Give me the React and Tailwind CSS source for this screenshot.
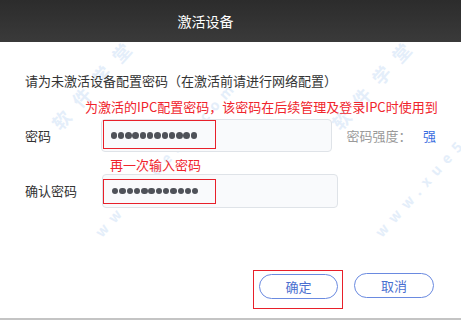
import React from "react";

const font = { fontFamily: '"Noto Sans CJK SC", "Noto Sans", sans-serif' };

function Dots() {
  return (
    <div className="flex items-center gap-[0.9px]">
      {Array.from({ length: 12 }).map((_, i) => (
        <span key={i} className="block w-[6.4px] h-[6.4px] rounded-full bg-[#4f5259]" />
      ))}
    </div>
  );
}

function Watermark({ className }) {
  return (
    <div
      className={"absolute pointer-events-none select-none text-[#e4eefa] font-bold leading-none -rotate-[48deg] origin-top-left whitespace-nowrap " + className}
    >
      <div className="text-[18px] tracking-[12px]">软件学堂</div>
      <div className="text-[14px] tracking-[7px] mt-[88px] -ml-[52px]">www.xue51.com</div>
    </div>
  );
}

export default function App() {
  return (
    <div className="relative w-[461px] h-[320px] bg-white overflow-hidden" style={font}>
      <Watermark className="left-[48px] top-[120px]" />
      <Watermark className="left-[328px] top-[120px]" />

      <div className="relative h-[42px] flex items-center justify-center pr-[50px] bg-gradient-to-b from-[#2c2c2c] to-[#3a3a3a]">
        <span className="text-white text-[14px] leading-none">激活设备</span>
      </div>

      <div className="relative px-[25px]">
        <div className="mt-[29px] text-[13px] leading-[20px] text-[#333] whitespace-nowrap">
          请为未激活设备配置密码（在激活前请进行网络配置）
        </div>
        <div className="mt-[6px] pl-[60px] text-[13px] leading-[20px] text-[#f0242c] whitespace-nowrap">
          为激活的IPC配置密码，该密码在后续管理及登录IPC时使用到
        </div>

        <div className="mt-[2px] flex items-center">
          <div className="w-[77px] text-[13px] text-[#333]">密码</div>
          <div className="relative w-[236px] h-[33px] rounded-[4px] border border-[#dfe3e8] bg-[#f9fafc] flex items-center pl-[9px]">
            <Dots />
            <div className="absolute left-[1px] top-[0px] w-[113px] h-[29px] border-[1.5px] border-[#e8202a]" />
          </div>
          <div className="ml-[14px] text-[13px] text-[#9a9a9a] w-[78px] whitespace-nowrap">密码强度：</div>
          <div className="text-[13px] text-[#3a6ee0]">强</div>
        </div>

        <div className="pl-[85px] text-[13px] leading-[18px] mt-[4px] text-[#f0242c]">再一次输入密码</div>

        <div className="flex items-center">
          <div className="w-[77px] text-[13px] text-[#333]">确认密码</div>
          <div className="relative w-[236px] h-[34px] rounded-[4px] border border-[#dfe3e8] bg-[#f9fafc] flex items-center pl-[9px]">
            <Dots />
            <div className="absolute left-[0px] top-[4px] w-[113px] h-[25px] border-[1.5px] border-[#e8202a]" />
          </div>
        </div>

        <div className="mt-[65px] flex pl-[234px] gap-[16px]">
          <div className="relative">
            <button className="w-[79px] h-[25px] rounded-full border border-[#6a8ae0] text-[#4a6fd0] text-[13px] leading-none bg-white">
              确定
            </button>
            <div className="absolute -left-[6px] -top-[3px] w-[90px] h-[39px] border-[1.5px] border-[#e8202a] pointer-events-none" />
          </div>
          <button className="w-[80px] h-[25px] rounded-full border border-[#6a8ae0] text-[#4a6fd0] text-[13px] leading-none bg-white">
            取消
          </button>
        </div>
      </div>

      <div className="absolute left-0 right-0 bottom-0 h-[2px] bg-[#c4c4c4]" />
    </div>
  );
}
